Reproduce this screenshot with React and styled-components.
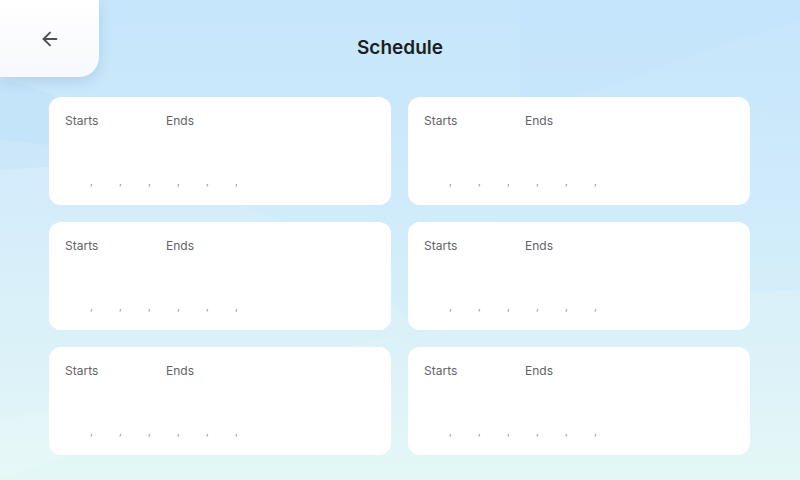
import React from "react";
import styled, { createGlobalStyle } from "styled-components";
import { ArrowLeft } from "lucide-react";

const Global = createGlobalStyle`
  html, body { margin: 0; padding: 0; }
  body { font-family: Inter, "Noto Sans", sans-serif; }
  #root { width: 800px; height: 480px; overflow: hidden; }
`;

const Page = styled.div`
  position: relative;
  width: 800px;
  height: 480px;
  overflow: hidden;
  background: linear-gradient(180deg, #c6e6fb 0%, #cfeafb 40%, #d8f1f8 75%, #e1f6f5 100%);
`;

const Waves = styled.svg`
  position: absolute;
  inset: 0;
  pointer-events: none;
`;

const Content = styled.div`
  position: relative;
  display: flex;
  flex-direction: column;
`;

const Header = styled.header`
  display: grid;
  grid-template-columns: 99px 1fr 99px;
  height: 77px;
`;

const BackButton = styled.button`
  display: flex;
  align-items: center;
  justify-content: center;
  width: 99px;
  height: 77px;
  border: none;
  padding: 0;
  background: linear-gradient(180deg, #ffffff 0%, #f7f8fc 100%);
  border-bottom-right-radius: 20px;
  box-shadow: 0 4px 14px rgba(60, 100, 140, 0.18);
  color: #4f5056;
  cursor: pointer;
`;

const Title = styled.h1`
  margin: 0;
  padding-top: 37px;
  text-align: center;
  font-size: 19px;
  line-height: 22px;
  font-weight: 600;
  color: #1b1f24;
`;

const Grid = styled.div`
  display: grid;
  grid-template-columns: 342px 342px;
  grid-auto-rows: 108px;
  column-gap: 17px;
  row-gap: 17px;
  margin: 20px 0 0 49px;
`;

const Card = styled.div`
  display: flex;
  flex-direction: column;
  background: #ffffff;
  border-radius: 12px;
  padding: 16px 16px 0 16px;
  box-sizing: border-box;
`;

const Labels = styled.div`
  display: flex;
`;

const Label = styled.span`
  width: ${(p) => p.$w}px;
  font-size: 12px;
  line-height: 16px;
  color: #626366;
`;

const Days = styled.div`
  display: flex;
  margin-top: 45px;
`;

const Day = styled.span`
  width: 29px;
  font-size: 10px;
  line-height: 14px;
  color: #8e8e93;
  text-align: right;
  padding-right: 1px;
  box-sizing: border-box;
`;

function ScheduleCard() {
  return (
    <Card>
      <Labels>
        <Label $w={101}>Starts</Label>
        <Label $w={60}>Ends</Label>
      </Labels>
      <Days>
        {[0, 1, 2, 3, 4, 5].map((i) => (
          <Day key={i}>,</Day>
        ))}
      </Days>
    </Card>
  );
}

export default function App() {
  return (
    <>
      <Global />
      <Page>
        <Waves width="800" height="480" viewBox="0 0 800 480">
          <path d="M0 80 C 60 90, 110 120, 140 160 L 0 170 Z" fill="#bde0f8" opacity="0.55" />
          <path d="M0 140 C 150 150, 300 210, 420 330 L 0 480 Z" fill="#ffffff" opacity="0.12" />
          <path d="M520 110 C 620 90, 720 40, 800 20 L 800 0 L 520 0 Z" fill="#bfe3fb" opacity="0.35" />
          <path d="M0 420 C 200 380, 500 300, 800 290 L 800 480 L 0 480 Z" fill="#ffffff" opacity="0.12" />
        </Waves>
        <Content>
          <Header>
            <BackButton aria-label="Back">
              <ArrowLeft size={22} strokeWidth={2.1} />
            </BackButton>
            <Title>Schedule</Title>
            <span />
          </Header>
          <Grid>
            {[0, 1, 2, 3, 4, 5].map((i) => (
              <ScheduleCard key={i} />
            ))}
          </Grid>
        </Content>
      </Page>
    </>
  );
}
